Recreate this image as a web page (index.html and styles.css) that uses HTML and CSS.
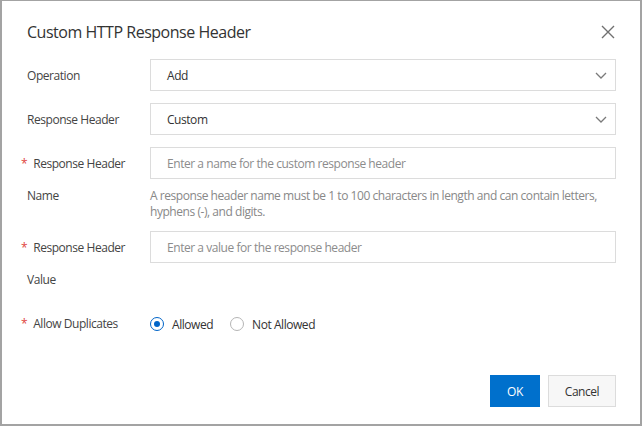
FILE: index.html
```html
<!DOCTYPE html>
<html lang="en">
<head>
<meta charset="utf-8">
<title>Custom HTTP Response Header</title>
<link rel="stylesheet" href="styles.css">
</head>
<body>
<div class="dialog">
  <div class="header">
    <h1 class="title">Custom HTTP Response Header</h1>
    <button class="close" aria-label="Close">
      <svg width="14" height="14" viewBox="0 0 14 14"><path d="M1 1L13 13M13 1L1 13" stroke="#707070" stroke-width="1.4" fill="none"/></svg>
    </button>
  </div>
  <div class="form">
    <div class="row">
      <div class="label">Operation</div>
      <div class="control">
        <div class="select"><span>Add</span>
          <svg class="chev" width="12" height="7" viewBox="0 0 12 7"><path d="M1 1L6 6L11 1" stroke="#7a7a7a" stroke-width="1.3" fill="none"/></svg>
        </div>
      </div>
    </div>
    <div class="row">
      <div class="label">Response Header</div>
      <div class="control">
        <div class="select"><span>Custom</span>
          <svg class="chev" width="12" height="7" viewBox="0 0 12 7"><path d="M1 1L6 6L11 1" stroke="#7a7a7a" stroke-width="1.3" fill="none"/></svg>
        </div>
      </div>
    </div>
    <div class="row">
      <div class="label"><span class="req">*</span>Response Header Name</div>
      <div class="control">
        <div class="input placeholder">Enter a name for the custom response header</div>
        <div class="help">A response header name must be 1 to 100 characters in length and can contain letters, hyphens (-), and digits.</div>
      </div>
    </div>
    <div class="row">
      <div class="label"><span class="req">*</span>Response Header Value</div>
      <div class="control">
        <div class="input placeholder">Enter a value for the response header</div>
      </div>
    </div>
    <div class="row">
      <div class="label"><span class="req">*</span>Allow Duplicates</div>
      <div class="control radios">
        <label class="radio"><span class="dot checked"></span>Allowed</label>
        <label class="radio"><span class="dot"></span>Not Allowed</label>
      </div>
    </div>
  </div>
  <div class="footer">
    <button class="btn primary">OK</button>
    <button class="btn secondary">Cancel</button>
  </div>
</div>
</body>
</html>
```
FILE: styles.css
```css
html, body {
  margin: 0;
  padding: 0;
  background: #fff;
}
body {
  font-family: "Open Sans", "Noto Sans", sans-serif;
  color: #333;
  letter-spacing: -0.45px;
}
.dialog {
  width: 642px;
  height: 426px;
  box-sizing: border-box;
  border: 2px solid #a3a3a3;
  border-top-width: 1px;
  padding: 19px 24px 17px 25px;
  display: flex;
  flex-direction: column;
}
.header {
  display: flex;
  align-items: center;
  justify-content: space-between;
  height: 24px;
}
.title {
  margin: 0;
  font-size: 16px;
  font-weight: 400;
  line-height: 24px;
  color: #333;
  letter-spacing: -0.48px;
}
.close {
  border: 0;
  background: none;
  padding: 0;
  margin-right: 1px;
  width: 14px;
  height: 14px;
  display: flex;
}
.form {
  margin-top: 15px;
  display: flex;
  flex-direction: column;
  gap: 12px;
}
.row {
  display: grid;
  grid-template-columns: 123px 1fr;
}
.label {
  font-size: 12px;
  line-height: 32px;
  color: #444;
  padding-right: 16px;
  padding-top: 1px;
  margin-bottom: -1px;
}
.req {
  color: #e0463c;
  margin-left: -6px;
  margin-right: 6px;
}
.select, .input {
  height: 32px;
  box-sizing: border-box;
  border: 1px solid #dcdcdc;
  padding: 1px 8px 0 16px;
  font-size: 12px;
  line-height: 29px;
  display: flex;
  align-items: center;
  justify-content: space-between;
}
.chev {
  margin-top: -1px;
}
.placeholder {
  color: #8c8c8c;
}
.help {
  margin-top: 9px;
  margin-bottom: -1px;
  font-size: 12px;
  line-height: 16px;
  color: #888;
}
.radios {
  display: flex;
  align-items: center;
  gap: 17px;
  height: 32px;
  font-size: 12px;
  margin-top: 1px;
}
.radio {
  display: flex;
  align-items: center;
  gap: 8px;
  color: #333;
}
.dot {
  width: 14px;
  height: 14px;
  box-sizing: border-box;
  border: 1px solid #b5b5b5;
  border-radius: 50%;
  background: #fff;
  position: relative;
}
.dot.checked {
  border: 1.5px solid #0064c8;
}
.dot.checked::after {
  content: "";
  position: absolute;
  left: 2.5px;
  top: 2.5px;
  width: 6px;
  height: 6px;
  border-radius: 50%;
  background: #0064c8;
}
.footer {
  margin-top: auto;
  display: flex;
  justify-content: flex-end;
  gap: 8px;
}
.btn {
  height: 32px;
  font-family: inherit;
  font-size: 12px;
  letter-spacing: inherit;
  box-sizing: border-box;
  padding: 0;
}
.primary {
  width: 50px;
  background: #0070cc;
  border: 1px solid #0070cc;
  color: #fff;
}
.secondary {
  width: 68px;
  background: #f7f7f7;
  border: 1px solid #dcdcdc;
  color: #333;
}
```
